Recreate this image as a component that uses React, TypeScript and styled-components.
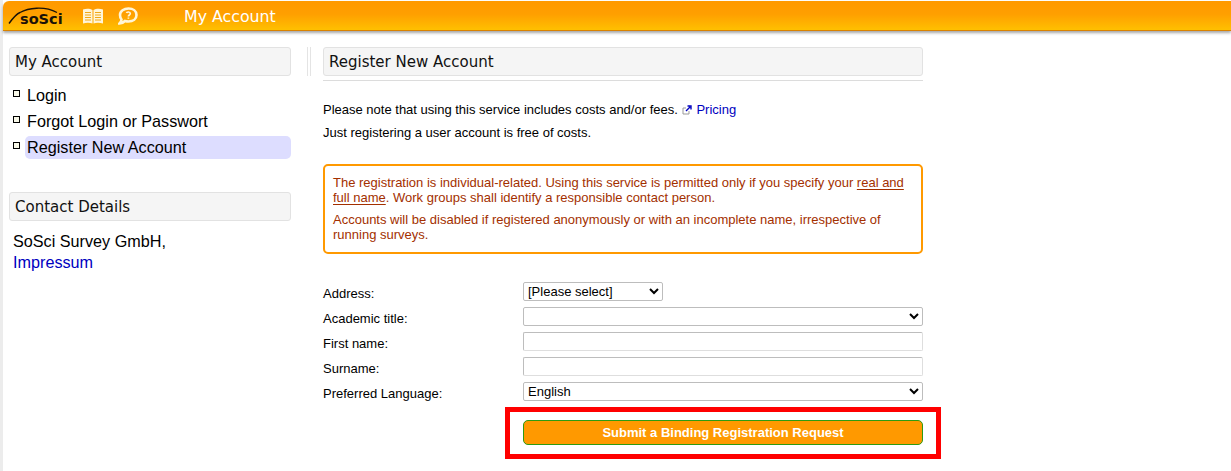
import React from 'react';
import styled, { createGlobalStyle } from 'styled-components';

const GlobalStyle = createGlobalStyle`
    html, body {
        margin: 0;
        padding: 0;
        height: 100%;
        background: #fff;
        font-family: 'Liberation Sans', Arial, sans-serif;
        color: #000;
        overflow: hidden;
    }
`;

const Page = styled.div`
    height: 471px;
    border-left: 3px solid #ececec;
    padding-top: 1px;
    box-sizing: border-box;
`;

const Header = styled.header`
    height: 29px;
    display: flex;
    align-items: center;
    background: linear-gradient(#ff9900, #ff9f00 45%, #ffc000);
    border-bottom: 1px solid #d98200;
    border-top-left-radius: 6px;
    box-shadow: 0 2px 3px rgba(0, 0, 0, 0.35);
    margin-bottom: 16px;
`;

const Logo = styled.div`
    position: relative;
    width: 60px;
    height: 24px;
    margin-left: 5px;
    padding: 8px 0 0 12px;
    box-sizing: border-box;
    font-family: 'DejaVu Sans', sans-serif;
    font-weight: bold;
    font-size: 14.5px;
    line-height: 15px;
    color: #1a1208;
    white-space: nowrap;

    svg {
        position: absolute;
        left: 0;
        top: 0;
    }
`;

const HeaderIcon = styled.svg<{ $left: number }>`
    margin-left: ${(p) => p.$left}px;
    flex: none;
`;

const HeaderTitle = styled.div`
    margin-left: 46px;
    padding-top: 2px;
    font-family: 'DejaVu Sans', sans-serif;
    font-size: 15.8px;
    color: #fff;
`;

const Columns = styled.div`
    display: flex;
    align-items: flex-start;
    padding-left: 6px;
`;

const Sidebar = styled.aside`
    width: 282px;
    flex: none;
`;

const Divider = styled.div`
    width: 4px;
    height: 29px;
    margin: 0 12px 0 16px;
    border-left: 1px solid #e4e4e4;
    border-right: 1px solid #e4e4e4;
    box-sizing: border-box;
    flex: none;
`;

const Main = styled.main`
    width: 600px;
    flex: none;
`;

const Heading = styled.h2`
    margin: 0;
    height: 29px;
    box-sizing: border-box;
    padding-left: 5px;
    background: #f5f5f5;
    border: 1px solid #e2e2e2;
    border-radius: 3px;
    font-family: 'DejaVu Sans', sans-serif;
    font-weight: normal;
    font-size: 15px;
    line-height: 28px;
    color: #111;
`;

const Nav = styled.ul`
    list-style: none;
    margin: 8px 0 0;
    padding: 0;
`;

const NavItem = styled.li`
    display: flex;
    align-items: flex-start;
    height: 26px;
    padding-left: 4px;
    font-size: 16.2px;
    line-height: 23px;

    &::before {
        content: '';
        width: 5px;
        height: 5px;
        margin-top: 6px;
        margin-right: 5px;
        border: 1px solid #000;
        background: #f8f8e8;
        flex: none;
    }
`;

const NavLabel = styled.span<{ $active?: boolean }>`
    flex: 1;
    padding-left: 2px;
    border-radius: 5px;
    background: ${(p) => (p.$active ? '#ddddff' : 'transparent')};
`;

const ContactHeading = styled(Heading)`
    margin-top: 30px;
`;

const Contact = styled.div`
    margin: 10px 0 0 4px;
    font-size: 16.2px;
    line-height: 21px;
`;

const Link = styled.a`
    color: #0000c0;
    text-decoration: none;
`;

const Rule = styled.div`
    height: 1px;
    margin-top: 4px;
    background: #dcdcdc;
`;

const Intro = styled.p`
    margin: 21px 0 0;
    font-size: 13px;
    line-height: 16px;

    & + & {
        margin-top: 7px;
    }
`;

const ExternalIcon = styled.svg`
    margin: 0 4px 0 1px;
    vertical-align: -0.5px;
`;

const Notice = styled.div`
    margin-top: 23px;
    height: 90px;
    box-sizing: border-box;
    padding: 9px 8px;
    border: 2px solid #ff9900;
    border-radius: 5px;
    color: #a33000;
    font-size: 13px;
    line-height: 15px;

    p {
        margin: 0 0 7px;
    }

    u {
        text-underline-offset: 2px;
    }
`;

const Form = styled.form`
    margin-top: 28px;
    display: grid;
    grid-template-columns: 200px 400px;
    row-gap: 6px;
    align-items: center;
`;

const Label = styled.label`
    font-size: 13px;
    line-height: 19px;
    padding-top: 2px;
    height: 19px;
    box-sizing: border-box;
`;

const Select = styled.select<{ $narrow?: boolean }>`
    width: ${(p) => (p.$narrow ? '140px' : '400px')};
    height: 19px;
    box-sizing: border-box;
    padding: 0;
    font-family: 'Liberation Sans', Arial, sans-serif;
    font-size: 13px;
    background: #fff;
    border: 1px solid #bdbdbd;
    border-radius: 2px;
    color: #000;
`;

const Input = styled.input`
    width: 400px;
    height: 19px;
    box-sizing: border-box;
    padding: 0 4px;
    font-size: 13px;
    border: 1px solid #bdbdbd;
    border-bottom-color: #dedede;
    border-right-color: #dedede;
    border-radius: 2px;
`;

const SubmitWrap = styled.div`
    grid-column: 2;
    position: relative;
    margin-top: 13px;
`;

const Submit = styled.button`
    display: block;
    width: 400px;
    height: 25px;
    padding: 0;
    background: #ff9900;
    border: 1px solid #2e9b12;
    border-radius: 5px;
    color: #fff;
    font-family: 'Liberation Sans', Arial, sans-serif;
    font-size: 13px;
    font-weight: bold;
`;

const Highlight = styled.div`
    position: absolute;
    left: -18px;
    top: -13px;
    width: 436px;
    height: 52px;
    box-sizing: border-box;
    border: 5px solid #ff0000;
    pointer-events: none;
`;

const App: React.FC = () => {
    return (
        <>
            <GlobalStyle />
            <Page>
                <Header>
                    <Logo>
                        <svg width="60" height="24" viewBox="0 0 60 24" fill="none">
                            <path d="M1 19.5 C5 14 8 10 12 8.5 C20 4 36 1.5 49 8.5" stroke="#1a1208" strokeWidth="1.4" />
                        </svg>
                        soSci
                    </Logo>
                    <HeaderIcon $left={14} width="22" height="16" viewBox="0 0 22 16" fill="#fff5d8">
                        <path d="M1 1.5 C4 0.5 8 0.5 10.5 2 V15.5 C8 14.5 4 14.5 1 15.5 Z" />
                        <path d="M21 1.5 C18 0.5 14 0.5 11.5 2 V15.5 C14 14.5 18 14.5 21 15.5 Z" />
                        <path
                            d="M3 4.5 H9 M3 7 H9 M3 9.5 H9 M3 12 H9 M13 4.5 H19 M13 7 H19 M13 9.5 H19 M13 12 H19"
                            stroke="#f0a818"
                            strokeWidth="1"
                        />
                    </HeaderIcon>
                    <HeaderIcon $left={14} width="20" height="18" viewBox="0 0 20 18" fill="none">
                        <path
                            d="M10.5 1.5 C15 1.5 18.5 4 18.5 8 C18.5 12 15 14.5 10.5 14.5 C9 14.5 8 14.3 7 14 C5.5 15.5 3.5 16.5 1.5 16.5 C3 15 3.5 13.5 3.5 12.5 C2.5 11.3 2 9.8 2 8 C2 4 6 1.5 10.5 1.5 Z"
                            stroke="#fff5d8"
                            strokeWidth="2.6"
                        />
                        <path
                            d="M8.5 6 C8.7 4.7 12.3 4.5 12.3 6.5 C12.3 8 10.4 8 10.4 9.5 M10.4 10.6 V11.8"
                            stroke="#fff5d8"
                            strokeWidth="1.7"
                        />
                    </HeaderIcon>
                    <HeaderTitle>My Account</HeaderTitle>
                </Header>
                <Columns>
                    <Sidebar>
                        <Heading>My Account</Heading>
                        <Nav>
                            <NavItem>
                                <NavLabel>Login</NavLabel>
                            </NavItem>
                            <NavItem>
                                <NavLabel>Forgot Login or Passwort</NavLabel>
                            </NavItem>
                            <NavItem>
                                <NavLabel $active>Register New Account</NavLabel>
                            </NavItem>
                        </Nav>
                        <ContactHeading>Contact Details</ContactHeading>
                        <Contact>
                            SoSci Survey GmbH,
                            <br />
                            <Link href="#">Impressum</Link>
                        </Contact>
                    </Sidebar>
                    <Divider />
                    <Main>
                        <Heading>Register New Account</Heading>
                        <Rule />
                        <Intro>
                            Please note that using this service includes costs and/or fees.{' '}
                            <ExternalIcon width="10" height="10" viewBox="0 0 10 10" fill="none">
                                <path d="M1 3 H4 M1 3 V9 H7 V6" stroke="#999" strokeWidth="1" />
                                <path d="M4 6 L8 2 M5.5 1 H9 V4.5" stroke="#0000c0" strokeWidth="1.4" />
                            </ExternalIcon>
                            <Link href="#">Pricing</Link>
                        </Intro>
                        <Intro>Just registering a user account is free of costs.</Intro>
                        <Notice>
                            <p>
                                The registration is individual-related. Using this service is permitted only if you
                                specify your <u>real and full name</u>. Work groups shall identify a responsible contact
                                person.
                            </p>
                            <p>
                                Accounts will be disabled if registered anonymously or with an incomplete name,
                                irrespective of running surveys.
                            </p>
                        </Notice>
                        <Form>
                            <Label>Address:</Label>
                            <Select $narrow defaultValue="select">
                                <option value="select">[Please select]</option>
                            </Select>
                            <Label>Academic title:</Label>
                            <Select defaultValue="">
                                <option value=""></option>
                            </Select>
                            <Label>First name:</Label>
                            <Input />
                            <Label>Surname:</Label>
                            <Input />
                            <Label>Preferred Language:</Label>
                            <Select defaultValue="en">
                                <option value="en">English</option>
                            </Select>
                            <SubmitWrap>
                                <Submit type="button">Submit a Binding Registration Request</Submit>
                                <Highlight />
                            </SubmitWrap>
                        </Form>
                    </Main>
                </Columns>
            </Page>
        </>
    );
};

export default App;
